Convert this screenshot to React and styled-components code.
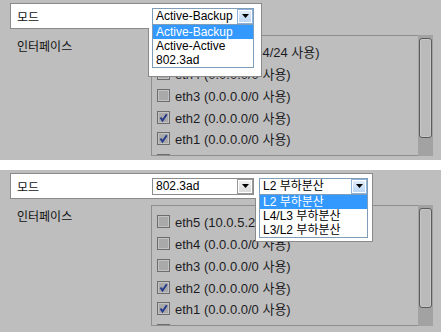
import React from 'react';
import styled, { createGlobalStyle } from 'styled-components';

const GlobalStyle = createGlobalStyle`
  html, body { margin: 0; padding: 0; background: #fff; }
  body { font-family: "Liberation Sans", "Noto Sans CJK KR", sans-serif; }
`;

const Page = styled.div`
  width: 441px;
  display: flex;
  flex-direction: column;
  gap: 10px;
`;

const Panel = styled.div`
  height: ${p => p.$h}px;
  box-sizing: border-box;
  background: #bebebe;
  padding: 3px 8px 0 10px;
  overflow: hidden;
`;

const ModeRow = styled.div`
  position: relative;
  z-index: 2;
  display: flex;
  align-items: center;
  width: fit-content;
  height: 26px;
  box-sizing: border-box;
  background: #fff;
  border: 1px solid #8a8a8a;
  padding-right: ${p => p.$padR}px;
`;

const Label = styled.div`
  width: 141px;
  box-sizing: border-box;
  padding-left: 6px;
  font-size: 12px;
  color: #111;
`;

const SelectGroup = styled.div`
  display: flex;
  gap: 5px;
`;

const Extension = styled.div`
  position: absolute;
  top: 100%;
  left: ${p => p.$left}px;
  right: -1px;
  height: ${p => p.$h}px;
  background: #fff;
  border: 1px solid #8a8a8a;
  border-top: none;
`;

const SelectBox = styled.div`
  position: relative;
  z-index: 3;
  width: ${p => p.$w}px;
  height: 17px;
  box-sizing: border-box;
  display: flex;
  align-items: center;
  background: #fff;
  border: 1px solid ${p => (p.$open ? '#7f9db9' : '#8c8c8c')};
`;

const Value = styled.span`
  flex: 1;
  padding-left: 3px;
  font-size: 12px;
  line-height: 15px;
  color: #000;
  white-space: nowrap;
  overflow: hidden;
`;

const ArrowBtn = styled.span`
  width: 16px;
  height: 15px;
  box-sizing: border-box;
  display: flex;
  align-items: center;
  justify-content: center;
  border: 1px solid ${p => (p.$open ? '#8fb2da' : '#9a9a9a')};
  box-shadow: inset 0 0 0 1px #fff;
  background: ${p =>
    p.$open
      ? 'linear-gradient(#e4eefb, #b9d5f4)'
      : 'linear-gradient(#f2f2f2, #d8d8d8)'};
`;

const Dropdown = styled.div`
  position: absolute;
  top: 100%;
  left: -1px;
  right: -1px;
  background: #fff;
  border: 1px solid #7f9db9;
`;

const Option = styled.div`
  height: ${p => p.$rowH}px;
  line-height: ${p => p.$rowH}px;
  padding-left: 3px;
  font-size: 12px;
  white-space: nowrap;
  color: ${p => (p.$active ? '#fff' : '#000')};
  background: ${p => (p.$active ? '#3399ff' : '#fff')};
`;

const InterfaceRow = styled.div`
  display: flex;
  margin-top: 6px;
`;

const SideLabel = styled.div`
  width: 141px;
  box-sizing: border-box;
  padding: 4px 0 0 7px;
  font-size: 12px;
  line-height: 16px;
  color: #111;
`;

const List = styled.div`
  flex: 1;
  height: 121px;
  box-sizing: border-box;
  display: flex;
  border: 1px solid #8e8e8e;
  border-right: none;
`;

const Items = styled.div`
  flex: 1;
  overflow: hidden;
  padding: 5px 0 0 5px;
`;

const Item = styled.div`
  display: flex;
  align-items: center;
  gap: 5px;
  height: 21.75px;
  font-size: 13px;
  color: #1c1c24;
  white-space: nowrap;
`;

const Check = styled.span`
  flex: none;
  width: 13px;
  height: 13px;
  box-sizing: border-box;
  display: flex;
  align-items: center;
  justify-content: center;
  border: 1px solid #6c6c6c;
  background: #a9a9a9;
  box-shadow: inset 0 0 0 1px #c2c2c2;
`;

const Scrollbar = styled.div`
  width: 15px;
  margin: -1px 0;
  box-sizing: border-box;
  padding: 3px 1px 0;
  background: #a2a2a2;
`;

const Thumb = styled.div`
  height: 100px;
  box-sizing: border-box;
  border: 1px solid #5b5b5b;
  border-radius: 3px;
  background: #bababa;
  box-shadow: inset 0 0 0 1px #c6c6c6;
`;

const Arrow = () => (
  <svg width="7" height="4" viewBox="0 0 7 4">
    <polygon points="0,0 7,0 3.5,4" fill="#000" />
  </svg>
);

const Tick = () => (
  <svg width="11" height="11" viewBox="0 0 11 11">
    <path d="M2.5 5.5 L4.5 8.5 L8.8 2.2" fill="none" stroke="#263a8c" strokeWidth="2" />
  </svg>
);

const Select = ({ w, value, open, options, rowH }) => (
  <SelectBox $w={w} $open={open}>
    <Value>{value}</Value>
    <ArrowBtn $open={open}><Arrow /></ArrowBtn>
    {open && (
      <Dropdown>
        {options.map(o => (
          <Option key={o} $rowH={rowH} $active={o === value}>{o}</Option>
        ))}
      </Dropdown>
    )}
  </SelectBox>
);

const ifaces = [
  { name: 'eth5 (10.0.5.254/24 사용)', on: false },
  { name: 'eth4 (0.0.0.0/0 사용)', on: false },
  { name: 'eth3 (0.0.0.0/0 사용)', on: false },
  { name: 'eth2 (0.0.0.0/0 사용)', on: true },
  { name: 'eth1 (0.0.0.0/0 사용)', on: true },
  { name: 'eth0 (10.0.4.254/24 사용)', on: false },
];

const Interfaces = () => (
  <InterfaceRow>
    <SideLabel>인터페이스</SideLabel>
    <List>
      <Items>
        {ifaces.map(i => (
          <Item key={i.name}>
            <Check>{i.on && <Tick />}</Check>
            {i.name}
          </Item>
        ))}
      </Items>
      <Scrollbar><Thumb /></Scrollbar>
    </List>
  </InterfaceRow>
);

export default function App() {
  return (
    <Page>
      <GlobalStyle />
      <Panel $h={160}>
        <ModeRow $padR={7}>
          <Label>모드</Label>
          <Select
            w={102}
            open
            rowH={14}
            value="Active-Backup"
            options={['Active-Backup', 'Active-Active', '802.3ad']}
          />
          <Extension $left={137} $h={48} />
        </ModeRow>
        <Interfaces />
      </Panel>
      <Panel $h={162}>
        <ModeRow $padR={4}>
          <Label>모드</Label>
          <SelectGroup>
            <Select w={102} value="802.3ad" />
            <Select
              w={109}
              open
              rowH={14}
              value="L2 부하분산"
              options={['L2 부하분산', 'L4/L3 부하분산', 'L3/L2 부하분산']}
            />
          </SelectGroup>
          <Extension $left={244} $h={43} />
        </ModeRow>
        <Interfaces />
      </Panel>
    </Page>
  );
}
